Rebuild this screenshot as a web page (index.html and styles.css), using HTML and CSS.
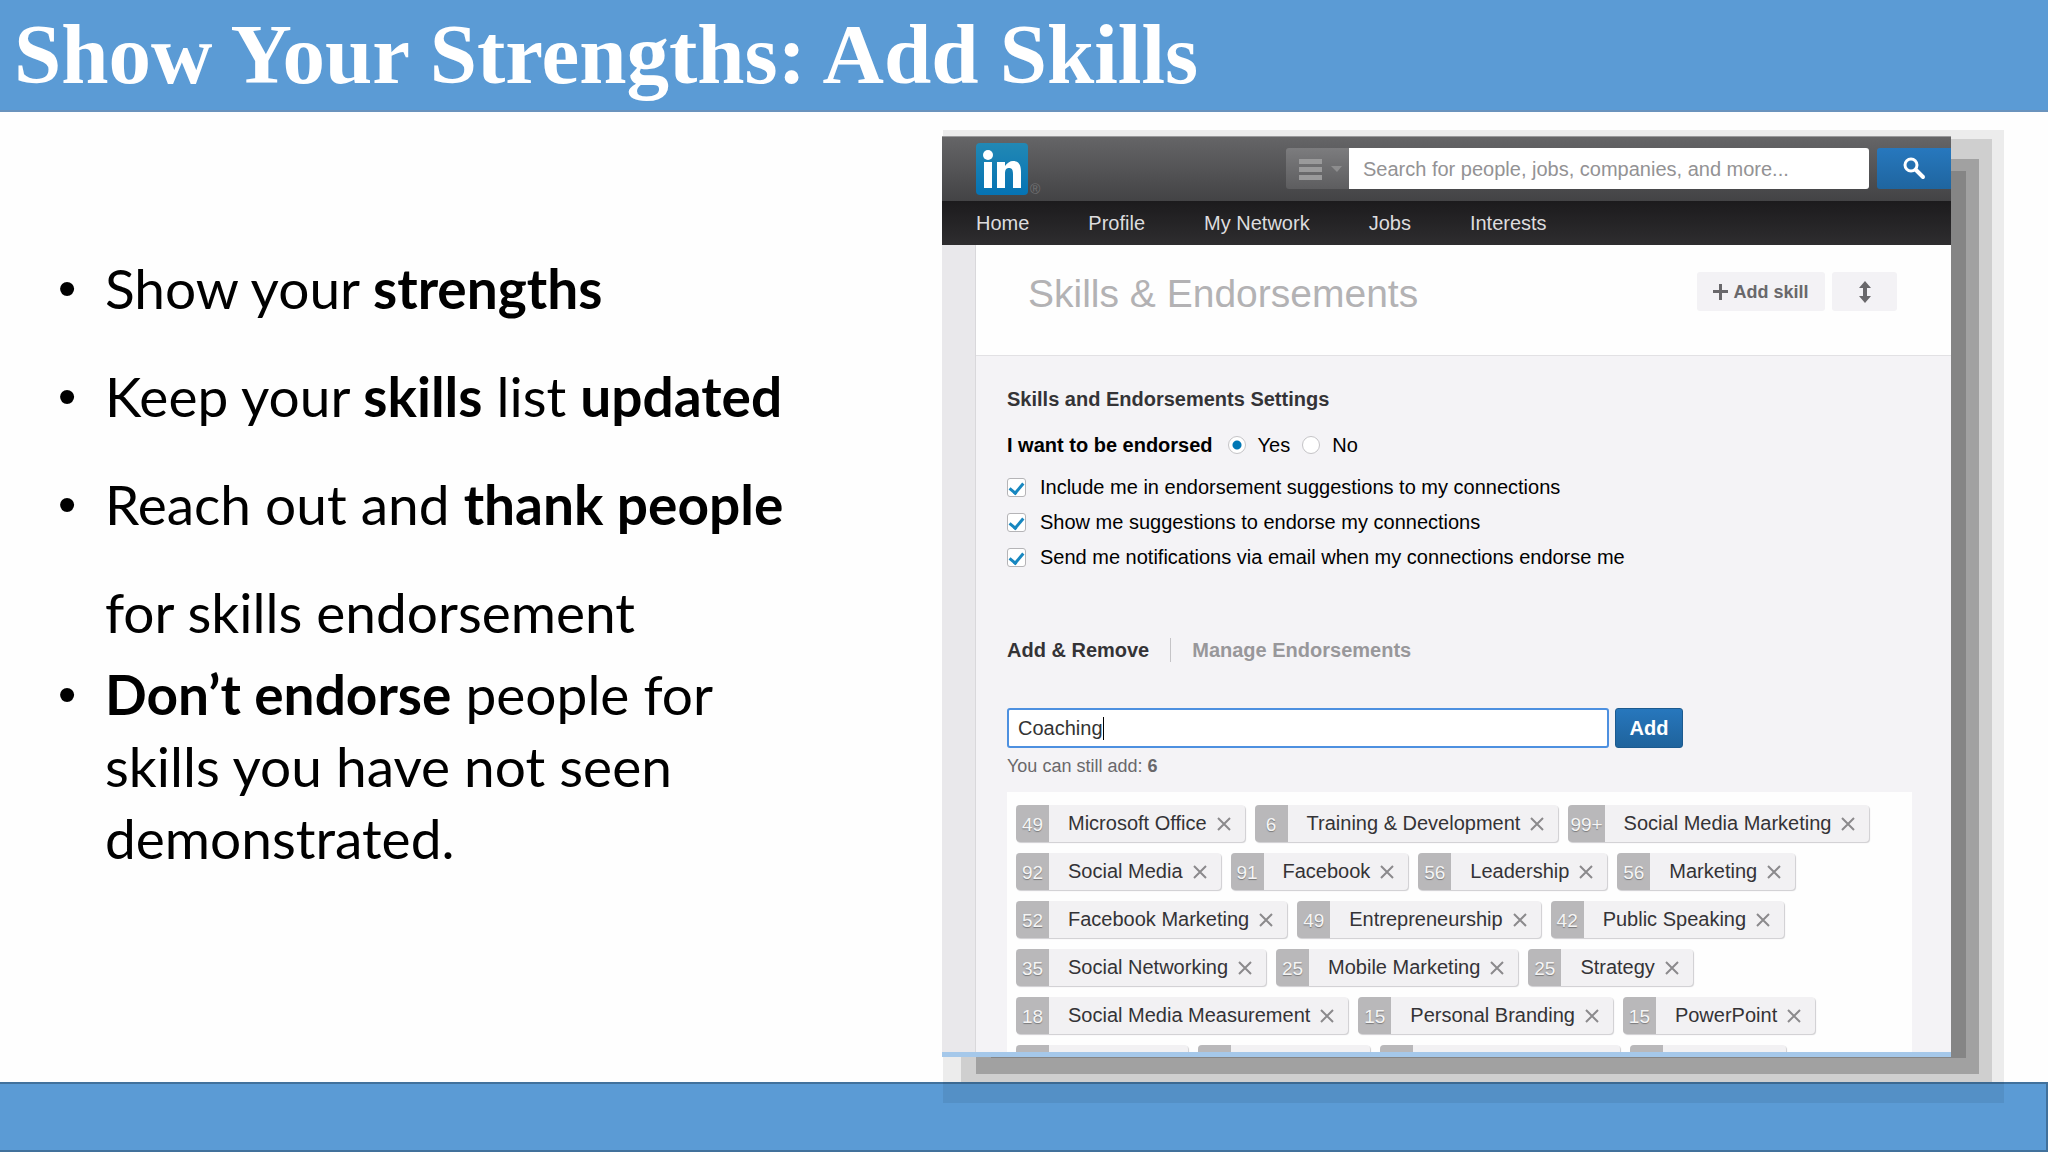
FILE: index.html
```html
<!DOCTYPE html>
<html lang="en">
<head>
    <meta charset="UTF-8">
    <meta name="viewport" content="width=device-width, initial-scale=1.0">
    <title>Show Your Strengths: Add Skills</title>
    <link rel="stylesheet" href="styles.css">
</head>
<body>
    <header class="slide-header">
        <h1>Show Your Strengths: Add Skills</h1>
    </header>

    <main class="slide-main">
        <ul class="points">
            <li class="loose"><p>Show your <b>strengths</b></p></li>
            <li class="loose"><p>Keep your <b>skills</b> list <b>updated</b></p></li>
            <li class="loose"><p>Reach out and <b>thank people</b><br>for skills endorsement</p></li>
            <li class="tight"><p><b>Don’t endorse</b> people for<br>skills you have not seen<br>demonstrated.</p></li>
        </ul>

        <section class="panel">
            <div class="topbar">
                <a class="logo" href="#" aria-label="LinkedIn">
                    <svg width="52" height="52" viewBox="0 0 52 52">
                        <defs>
                            <linearGradient id="logo-fill" x1="0" y1="0" x2="0" y2="1">
                                <stop offset="0" stop-color="#2288b4"/>
                                <stop offset="1" stop-color="#0573b4"/>
                            </linearGradient>
                        </defs>
                        <rect width="52" height="52" rx="4" fill="url(#logo-fill)"/>
                        <circle cx="12" cy="12" r="5" fill="#fff"/>
                        <rect x="8" y="19" width="8" height="26" fill="#fff"/>
                        <path d="M21 19h8v4c2-3 5-5 8-5 6 0 8 4 8 11v16h-8V31c0-4-1-6-4-6s-4 2-4 6v14h-8z" fill="#fff"/>
                    </svg>
                    <span class="reg">®</span>
                </a>
                <form class="search">
                    <button type="button" class="search-type" aria-label="Search type">
                        <svg width="63" height="41" viewBox="0 0 63 41">
                            <path d="M13 11h23v5H13zM13 19h23v5H13zM13 27h23v5H13z" fill="#9a9a9b"/>
                            <path d="M45 18h11l-5 6z" fill="#8d8d8e"/>
                        </svg>
                    </button>
                    <input type="text" class="search-text" aria-label="Search" placeholder="Search for people, jobs, companies, and more...">
                    <button type="button" class="search-go" aria-label="Go">
                        <svg width="24" height="24" viewBox="0 0 24 24" fill="none" stroke="#fff">
                            <circle cx="9" cy="8" r="6" stroke-width="3"/>
                            <path d="M14 13l7 7" stroke-width="4" stroke-linecap="round"/>
                        </svg>
                    </button>
                </form>
            </div>

            <nav class="nav">
                <a href="#">Home</a>
                <a href="#">Profile</a>
                <a href="#">My Network</a>
                <a href="#">Jobs</a>
                <a href="#">Interests</a>
            </nav>

            <div class="content">
                <div class="content-head">
                    <h2>Skills &amp; Endorsements</h2>
                    <button type="button" class="btn-gray">
                        <svg width="16" height="16" viewBox="0 0 16 16"><path d="M6 0h3v6h6v3H9v7H6V9H0V6h6z" fill="#69686b"/></svg>
                        Add skill
                    </button>
                    <button type="button" class="btn-gray btn-move" aria-label="Move section">
                        <svg width="14" height="22" viewBox="0 0 14 22"><path d="M7 0l6 7H9v8h4l-6 7-6-7h4V7H1z" fill="#69686b"/></svg>
                    </button>
                </div>

                <div class="content-body">
                    <h3>Skills and Endorsements Settings</h3>
                    <div class="endorsed">
                        <b>I want to be endorsed</b>
                        <label><input type="radio" name="endorsed" checked>Yes</label>
                        <label><input type="radio" name="endorsed">No</label>
                    </div>
                    <div class="options">
                        <label><input type="checkbox" checked>Include me in endorsement suggestions to my connections</label>
                        <label><input type="checkbox" checked>Show me suggestions to endorse my connections</label>
                        <label><input type="checkbox" checked>Send me notifications via email when my connections endorse me</label>
                    </div>

                    <div class="tabs">
                        <a href="#" class="active">Add &amp; Remove</a>
                        <a href="#">Manage Endorsements</a>
                    </div>

                    <form class="add-form">
                        <div class="field">
                            <input type="text" aria-label="Skill" value="Coaching" autocomplete="off">
                            <span class="caret"></span>
                        </div>
                        <button type="button" class="btn-add">Add</button>
                    </form>
                    <p class="left">You can still add: <b>6</b></p>

                    <ul class="skills">
                        <li><span class="count">49</span>Microsoft Office<button type="button" aria-label="Remove"></button></li>
                        <li><span class="count">6</span>Training &amp; Development<button type="button" aria-label="Remove"></button></li>
                        <li><span class="count">99+</span>Social Media Marketing<button type="button" aria-label="Remove"></button></li>
                        <li><span class="count">92</span>Social Media<button type="button" aria-label="Remove"></button></li>
                        <li><span class="count">91</span>Facebook<button type="button" aria-label="Remove"></button></li>
                        <li><span class="count">56</span>Leadership<button type="button" aria-label="Remove"></button></li>
                        <li><span class="count">56</span>Marketing<button type="button" aria-label="Remove"></button></li>
                        <li><span class="count">52</span>Facebook Marketing<button type="button" aria-label="Remove"></button></li>
                        <li><span class="count">49</span>Entrepreneurship<button type="button" aria-label="Remove"></button></li>
                        <li><span class="count">42</span>Public Speaking<button type="button" aria-label="Remove"></button></li>
                        <li><span class="count">35</span>Social Networking<button type="button" aria-label="Remove"></button></li>
                        <li><span class="count">25</span>Mobile Marketing<button type="button" aria-label="Remove"></button></li>
                        <li><span class="count">25</span>Strategy<button type="button" aria-label="Remove"></button></li>
                        <li><span class="count">18</span>Social Media Measurement<button type="button" aria-label="Remove"></button></li>
                        <li><span class="count">15</span>Personal Branding<button type="button" aria-label="Remove"></button></li>
                        <li><span class="count">15</span>PowerPoint<button type="button" aria-label="Remove"></button></li>
                        <li class="cut w-170"><span class="count"></span></li>
                        <li class="cut w-170"><span class="count"></span></li>
                        <li class="cut w-240"><span class="count"></span></li>
                        <li class="cut w-160"><span class="count"></span></li>
                    </ul>
                </div>
            </div>
        </section>
    </main>

    <footer class="slide-footer"></footer>

    <script>
        // same remove icon on every skill
        document.querySelectorAll('.skills button').forEach((btn)=> {
            btn.innerHTML = '<svg width="14" height="14" viewBox="0 0 14 14"><path d="M1 1l12 12M13 1L1 13" stroke="#8b8a8c" stroke-width="2"/></svg>';
        });
    </script>
</body>
</html>
```
FILE: styles.css
```css
* {
    box-sizing: border-box;
}

body {
    margin: 0;
    height: 100vh;
    display: flex;
    flex-direction: column;
    background-color: #fefefe;
    font-family: "Liberation Sans", Arial, sans-serif;
    font-size: 20px;
    line-height: 24px;
    color: #000;
}

h1, h2, h3, p, ul {
    margin: 0;
    padding: 0;
}

ul {
    list-style: none;
}

a {
    text-decoration: none;
}

button, input {
    margin: 0;
    padding: 0;
    border: none;
    font: inherit;
}

button {
    display: flex;
    align-items: center;
    justify-content: center;
    cursor: pointer;
}

/* slide */

.slide-header {
    height: 112px;
    padding: 0 14px;
    background-color: #5b9bd5;
    border-bottom: 2px solid #6a93bd;
}

.slide-header h1 {
    font-family: "Liberation Serif", "Times New Roman", serif;
    font-size: 85px;
    line-height: 108px;
    color: #fff;
    white-space: nowrap;
}

.slide-main {
    flex: 1;
    min-height: 0;
    display: grid;
    grid-template-columns: 942fr 1009fr;
    grid-template-rows: minmax(0, 1fr);
    padding: 24px 97px 25px 0;
}

.slide-footer {
    height: 70px;
    background-color: #5b9bd5;
    border: 2px solid #41719c;
    border-left: none;
}

.points {
    padding: 98px 0 0 58px;
    font-family: Lato, Calibri, sans-serif;
    font-size: 55px;
    white-space: nowrap;
}

.points li {
    display: flex;
}

.points li::before {
    content: "•";
    width: 47px;
    font-family: "Liberation Sans", Arial, sans-serif;
    font-size: 52px;
}

.loose {
    line-height: 108px;
}

.tight {
    line-height: 72px;
    margin-top: -8px;
}

/* panel */

.panel {
    position: relative;
    display: flex;
    flex-direction: column;
    background-color: #e9e8eb;
    border-bottom: 5px solid #a5c8ea;
    box-shadow:
        32px 18px 0 -17px rgba(0, 0, 0, .17),
        31px 20px 0 -3px rgba(0, 0, 0, .22),
        30px 14px 0 11px rgba(0, 0, 0, .12),
        27px 20px 0 26px rgba(0, 0, 0, .07);
}

.topbar {
    flex: none;
    display: flex;
    justify-content: space-between;
    height: 65px;
    padding: 6px 0 0 34px;
    background: linear-gradient(#656567, #434345);
    border-top: 1px solid #9a9a9c;
}

.logo {
    display: flex;
    gap: 2px;
}

.reg {
    align-self: flex-end;
    font-size: 14px;
    color: #717173;
}

.search {
    display: flex;
    width: 665px;
    height: 41px;
    margin-top: 5px;
}

.search-type {
    background: linear-gradient(#7c7c7e, #5d5d5f);
    border-radius: 3px 0 0 3px;
}

.search-text {
    flex: 1;
    padding: 0 14px;
    background-color: #fff;
    border-radius: 0 3px 3px 0;
}

.search-text::placeholder {
    color: #939294;
}

.search-go {
    width: 74px;
    margin-left: 8px;
    background: linear-gradient(#2778be, #1f659f);
    border-radius: 3px 0 0 3px;
}

.nav {
    flex: none;
    display: flex;
    align-items: center;
    gap: 59px;
    height: 44px;
    padding-left: 34px;
    background: linear-gradient(#1c1b1d, #2e2d2f);
}

.nav a {
    color: #dddcde;
}

.content {
    flex: 1;
    min-height: 0;
    display: flex;
    flex-direction: column;
    margin-left: 34px;
    background-color: #f4f3f6;
    box-shadow: -1px 0 0 #d9d8db;
}

.content-head {
    flex: none;
    display: flex;
    gap: 7px;
    height: 111px;
    padding: 27px 54px 0 52px;
    background-color: #fefefe;
    border-bottom: 1px solid #e2e1e4;
}

.content-head h2 {
    flex: 1;
    font-size: 39px;
    line-height: 44px;
    font-weight: normal;
    color: #b3b2b4;
}

.btn-gray {
    gap: 4px;
    width: 128px;
    height: 39px;
    background-color: #f3f2f5;
    border-radius: 3px;
    font-size: 18px;
    font-weight: bold;
    color: #69686b;
}

.btn-move {
    width: 65px;
}

.content-body {
    flex: 1;
    min-height: 0;
    display: flex;
    flex-direction: column;
    padding: 31px 39px 0 31px;
}

.content-body h3 {
    font-size: 20px;
    line-height: 24px;
    color: #343336;
}

.endorsed {
    display: flex;
    align-items: center;
    gap: 12px;
    margin-top: 22px;
}

.endorsed label, .options label {
    display: flex;
    align-items: center;
}

.endorsed label {
    gap: 12px;
}

.endorsed b {
    margin-right: 3px;
}

input[type="radio"], input[type="checkbox"] {
    appearance: none;
    width: 18px;
    height: 18px;
    background-color: #fff;
    border: 1px solid #c5c4c7;
}

input[type="radio"] {
    border-radius: 50%;
}

input[type="radio"]:checked {
    background: radial-gradient(circle, #0077b5 4px, #fff 5px);
}

input[type="checkbox"] {
    display: flex;
    justify-content: center;
    width: 19px;
    height: 19px;
    border-radius: 3px;
    border-color: #b5b4b7;
}

input[type="checkbox"]:checked::before {
    content: "";
    width: 6px;
    height: 11px;
    margin-top: 1px;
    border: solid #1787c0;
    border-width: 0 3px 3px 0;
    transform: rotate(40deg);
}

.options {
    display: flex;
    flex-direction: column;
    gap: 11px;
    margin-top: 18px;
}

.options label {
    gap: 14px;
}

.tabs {
    display: flex;
    margin-top: 69px;
}

.tabs a {
    font-weight: bold;
    color: #98979a;
}

.tabs .active {
    margin-right: 21px;
    padding-right: 21px;
    border-right: 1px solid #c5c4c7;
    color: #343336;
}

.add-form {
    display: flex;
    gap: 6px;
    margin-top: 46px;
}

.field {
    position: relative;
    width: 602px;
}

.field input {
    width: 100%;
    height: 40px;
    padding: 0 9px;
    background-color: #fff;
    border: 2px solid #4d90e0;
    border-radius: 3px;
    outline: none;
    color: #333;
}

.caret {
    position: absolute;
    top: 9px;
    left: 96px;
    width: 1px;
    height: 23px;
    background-color: #000;
}

.btn-add {
    width: 68px;
    background: linear-gradient(#2777bd, #1f639c);
    border: 1px solid #1c5a8f;
    border-radius: 3px;
    font-weight: bold;
    color: #fff;
}

.left {
    margin-top: 6px;
    font-size: 18px;
    color: #69686b;
}

.skills {
    flex: 1;
    min-height: 0;
    display: flex;
    flex-wrap: wrap;
    align-content: flex-start;
    gap: 11px 10px;
    margin-top: 14px;
    padding: 13px 9px 0;
    overflow: hidden;
    background-color: #fefefe;
}

.skills li {
    display: flex;
    align-items: center;
    height: 37px;
    padding-right: 14px;
    background-color: #f2f1f3;
    border-radius: 4px;
    box-shadow: 1px 1px 1px #cfced1;
    color: #343336;
    line-height: 33px;
}

.count {
    align-self: stretch;
    min-width: 33px;
    margin-right: 19px;
    padding: 3px 2px 0;
    background-color: #b9b8ba;
    border-radius: 4px 0 0 4px;
    font-size: 19px;
    line-height: 33px;
    text-align: center;
    text-shadow: 0 1px 1px #79787a;
    color: #f5f5f5;
}

.skills button {
    margin-left: 10px;
    background: none;
}

.cut.w-160 {
    width: 156px;
}

.cut.w-170 {
    width: 172px;
}

.cut.w-240 {
    width: 240px;
}
```
